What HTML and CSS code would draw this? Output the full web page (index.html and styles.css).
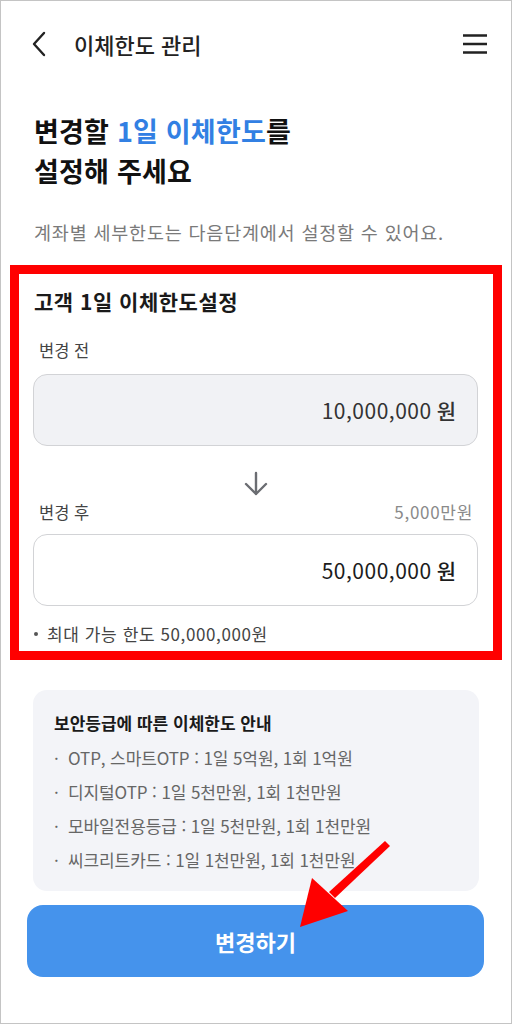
FILE: index.html
```html
<!DOCTYPE html>
<html lang="ko">
<head>
<meta charset="utf-8">
<title>이체한도 관리</title>
<link rel="stylesheet" href="styles.css">
</head>
<body>
<div class="frame">
  <header class="topbar">
    <div class="left">
      <svg class="back" width="16" height="26" viewBox="0 0 16 26"><path d="M13 2 L3 13 L13 24" fill="none" stroke="#222" stroke-width="2.4" stroke-linecap="round" stroke-linejoin="round"/></svg>
      <h1 class="title">이체한도 관리</h1>
    </div>
    <svg class="menu" width="26" height="22" viewBox="0 0 26 22"><path d="M1 2.5 H25 M1 11 H25 M1 19.5 H25" stroke="#222" stroke-width="2.4"/></svg>
  </header>

  <section class="intro">
    <h2 class="heading">변경할 <span class="blue">1일 이체한도</span>를<br>설정해 주세요</h2>
    <p class="sub">계좌별 세부한도는 다음단계에서 설정할 수 있어요.</p>
  </section>

  <section class="limitbox">
    <h3 class="boxtitle">고객 1일 이체한도설정</h3>
    <div class="label">변경 전</div>
    <div class="field before"><span class="num">10,000,000</span><span class="won">원</span></div>
    <div class="arrowrow">
      <svg width="26" height="26" viewBox="0 0 26 26"><path d="M13 2 V23 M3 13 L13 23 L23 13" fill="none" stroke="#6b6d72" stroke-width="2.4" stroke-linecap="round" stroke-linejoin="round"/></svg>
    </div>
    <div class="labelrow"><span class="label">변경 후</span><span class="hint">5,000만원</span></div>
    <div class="field after"><span class="num">50,000,000</span><span class="won">원</span></div>
    <p class="note"><span class="dot"></span>최대 가능 한도 50,000,000원</p>
  </section>

  <section class="info">
    <h4 class="infotitle">보안등급에 따른 이체한도 안내</h4>
    <ul class="infolist">
      <li>OTP, 스마트OTP : 1일 5억원, 1회 1억원</li>
      <li>디지털OTP : 1일 5천만원, 1회 1천만원</li>
      <li>모바일전용등급 : 1일 5천만원, 1회 1천만원</li>
      <li>씨크리트카드 : 1일 1천만원, 1회 1천만원</li>
    </ul>
  </section>

  <button class="cta">변경하기</button>

  <svg class="pointer" width="512" height="1024" viewBox="0 0 512 1024">
    <path d="M385 841 L390 846 L335 898 L329 892 Z" fill="#ff0000"/>
    <path d="M300 927 L312 878 L348 911 Z" fill="#ff0000"/>
  </svg>
</div>
</body>
</html>
```

FILE: styles.css
```css
* { box-sizing: border-box; margin: 0; padding: 0; }
html, body { width: 512px; height: 1024px; background: #fff; }
body {
  font-family: "Noto Sans CJK KR", "Noto Sans", "Liberation Sans", sans-serif;
  color: #222;
}
.frame {
  position: relative;
  width: 512px;
  height: 1024px;
  border: 1px solid #c4c4c4;
  overflow: hidden;
}
.topbar {
  height: 85px;
  display: flex;
  align-items: center;
  justify-content: space-between;
  padding: 0 23px 0 30px;
}
.left { display: flex; align-items: center; }
.back { display: block; }
.title {
  margin-left: 27px;
  font-size: 22px;
  font-weight: 500;
  color: #222;
  letter-spacing: 0;
}
.menu { display: block; }

.intro { padding: 0 33px; margin-top: 25px; }
.heading {
  font-size: 27px;
  font-weight: 700;
  line-height: 40px;
  color: #111;
  letter-spacing: 0.2px;
}
.blue { color: #3280e3; }
.sub {
  margin-top: 29px;
  font-size: 18.5px;
  line-height: 24px;
  color: #7a7a7a;
  letter-spacing: 0.8px;
}

.limitbox {
  margin: 21px 9px 0 9px;
  border: 9px solid #ff0000;
  padding: 14px 15px 6px 14px;
}
.boxtitle {
  font-size: 21px;
  font-weight: 700;
  line-height: 26px;
  color: #1a1a1a;
  padding-left: 1px;
  letter-spacing: 0.5px;
}
.label {
  font-size: 16.5px;
  line-height: 22px;
  color: #444;
  padding-left: 6px;
}
.limitbox > .label { margin-top: 25px; }
.field {
  margin-top: 13px;
  height: 72px;
  border: 1px solid #d2d3d6;
  border-radius: 14px;
  display: flex;
  align-items: center;
  justify-content: flex-end;
  padding-right: 21px;
  font-size: 21px;
  color: #333;
}
.field.before { background: #f1f2f5; }
.field.after { background: #fff; margin-top: 11px; color: #1c1c1c; }
.num { letter-spacing: 0.5px; }
.won { margin-left: 5px; font-weight: 500; }
.arrowrow {
  display: flex;
  justify-content: center;
  margin-top: 25px;
  height: 26px;
}
.arrowrow svg { display: block; }
.labelrow {
  margin-top: 4px;
  display: flex;
  justify-content: space-between;
  align-items: center;
}
.hint {
  font-size: 17px;
  line-height: 22px;
  color: #8a8a8a;
  padding-right: 5px;
  letter-spacing: 0.7px;
}
.note {
  margin-top: 17px;
  font-size: 17px;
  line-height: 22px;
  color: #444;
  padding-left: 1px;
  letter-spacing: 0.6px;
  display: flex;
  align-items: center;
}
.dot {
  width: 4px;
  height: 4px;
  border-radius: 50%;
  background: #555;
  margin-right: 9px;
  flex: none;
}

.info {
  margin: 30px 32px 0 32px;
  background: #f3f4f8;
  border-radius: 14px;
  padding: 22px 21px 14px 21px;
}
.infotitle {
  font-size: 17px;
  font-weight: 700;
  line-height: 22px;
  color: #1a1a1a;
}
.infolist {
  list-style: none;
  margin-top: 7px;
}
.infolist li {
  position: relative;
  padding-left: 14px;
  font-size: 17px;
  line-height: 34px;
  color: #666;
  letter-spacing: -0.1px;
}
.infolist li::before {
  content: "·";
  position: absolute;
  left: 0;
  top: 0;
  color: #666;
}

.cta {
  display: block;
  margin: 14px 27px 0 26px;
  width: calc(100% - 53px);
  height: 72px;
  border: none;
  border-radius: 16px;
  background: #4593ec;
  color: #fff;
  font-family: inherit;
  font-size: 22px;
  font-weight: 700;
}

.pointer {
  position: absolute;
  left: -1px;
  top: -1px;
  pointer-events: none;
}
```
